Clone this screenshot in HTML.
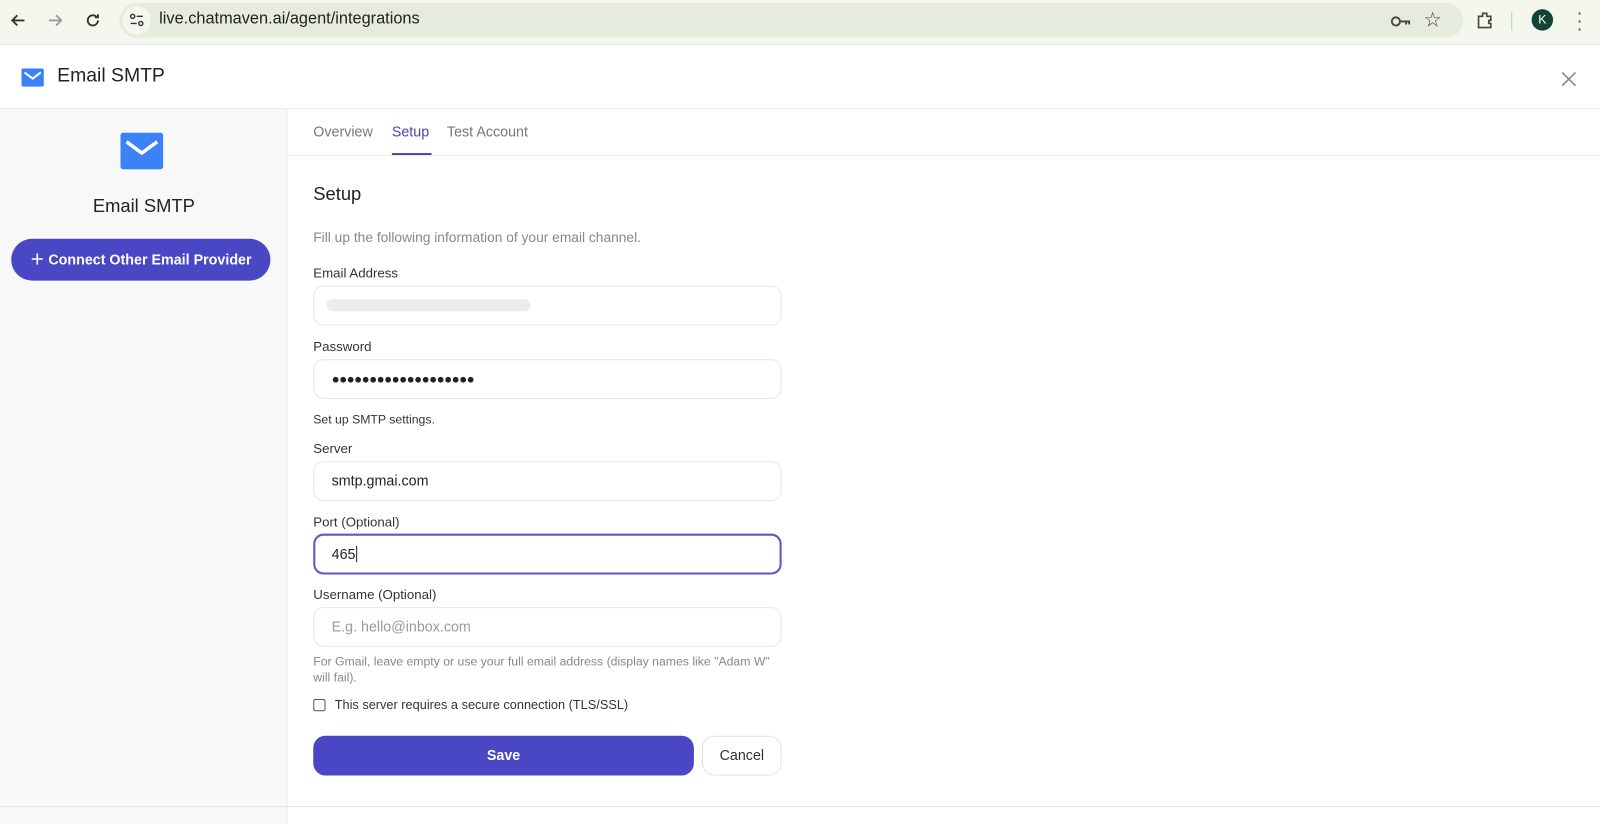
<!DOCTYPE html>
<html><head><meta charset="utf-8"><style>
*{box-sizing:border-box;margin:0;padding:0}
body{width:1600px;height:808px;overflow:hidden;font-family:"Liberation Sans",sans-serif;background:#fff;position:relative;color:#222}
#w{position:absolute;left:0;top:0;width:1568px;height:792px;transform:scale(1.0204);transform-origin:0 0}
.abs{position:absolute}
.chrome{left:0;top:0;width:1568px;height:44px;background:#f4f7ee;border-bottom:1px solid #e4e8dc}
.url{left:117px;top:3px;width:1317px;height:34px;border-radius:17px;background:#e6ebdf}
.lbl{font-size:13px;color:#333;position:absolute;left:307px}
.inp{position:absolute;left:307px;width:459px;height:39px;border:1px solid #e8e8e8;border-radius:10px;font-size:14px;color:#222;padding-left:17px;line-height:37px;background:#fff}
</style></head><body><div id="w">
<div class="abs chrome"></div>
<div class="abs url"></div>
<svg class="abs" style="left:8px;top:10px" width="20" height="20" viewBox="0 0 20 20"><path d="M16 10H4M9 5l-5 5 5 5" stroke="#333" stroke-width="1.8" fill="none"/></svg>
<svg class="abs" style="left:44px;top:10px" width="20" height="20" viewBox="0 0 20 20"><path d="M4 10h12M11 5l5 5-5 5" stroke="#999" stroke-width="1.8" fill="none"/></svg>
<svg class="abs" style="left:81px;top:10px" width="20" height="20" viewBox="0 0 20 20"><path d="M15 10a5 5 0 1 1-1.5-3.6M15 4v3h-3" stroke="#333" stroke-width="1.8" fill="none"/></svg>
<div class="abs" style="left:120px;top:6px;width:28px;height:28px;border-radius:14px;background:#f4f7ee"></div>
<svg class="abs" style="left:126px;top:12px" width="16" height="16" viewBox="0 0 16 16"><circle cx="4" cy="4" r="2" stroke="#333" fill="none" stroke-width="1.4"/><path d="M8 4h6M2 11h6" stroke="#333" stroke-width="1.4"/><circle cx="12" cy="11" r="2" stroke="#333" fill="none" stroke-width="1.4"/></svg>
<div class="abs" style="left:156px;top:10px;font-size:16px;color:#222">live.chatmaven.ai/agent/integrations</div>
<svg class="abs" style="left:1362px;top:12px" width="22" height="18" viewBox="0 0 22 18"><circle cx="6" cy="9" r="4" stroke="#444" stroke-width="1.8" fill="none"/><path d="M10 9h9v3M16 9v3" stroke="#444" stroke-width="1.8" fill="none"/></svg>
<div class="abs" style="left:1395px;top:7px;font-size:20px;color:#444">☆</div>
<svg class="abs" style="left:1446px;top:10px" width="20" height="20" viewBox="0 0 20 20"><path d="M3 6h4V3h4v3h4v4h-2v3h2v4H3z" stroke="#444" stroke-width="1.6" fill="none"/></svg>
<div class="abs" style="left:1481px;top:12px;width:1px;height:18px;background:#b8d4a8"></div>
<div class="abs" style="left:1501px;top:9px;width:21px;height:21px;border-radius:50%;background:#134236;color:#fff;font-size:12px;text-align:center;line-height:21px">K</div>
<div class="abs" style="left:1545px;top:8px;font-size:18px;color:#444;line-height:8px">·<br>·<br>·</div>

<svg class="abs" style="left:21px;top:67px" width="22" height="18" viewBox="0 0 22 18"><rect width="22" height="18" rx="2" fill="#3b82f6"/><path d="M3 4l8 6 8-6" stroke="#fff" stroke-width="2" fill="none"/></svg>
<div class="abs" style="left:56px;top:64px;font-size:19px;color:#222">Email SMTP</div>
<svg class="abs" style="left:1530px;top:70px" width="15" height="15" viewBox="0 0 15 15"><path d="M1 1l13 13M14 1L1 14" stroke="#888" stroke-width="1.5"/></svg>
<div class="abs" style="left:0;top:106px;width:1568px;height:1px;background:#ececec"></div>
<div class="abs" style="left:0;top:107px;width:282px;height:701px;background:#f8f8f8;border-right:1px solid #ececec"></div>
<svg class="abs" style="left:118px;top:130px" width="42" height="36" viewBox="0 0 42 36"><rect width="42" height="36" rx="3" fill="#3b82f6"/><path d="M6 9l15 11 15-11" stroke="#fff" stroke-width="3.5" fill="none"/></svg>
<div class="abs" style="left:0;width:282px;top:192px;text-align:center;font-size:18px;color:#222">Email SMTP</div>
<div class="abs" style="left:11px;top:234px;width:254px;height:41px;border-radius:21px;background:#4a47c4;color:#fff;font-size:14px;font-weight:bold;line-height:41px;text-align:center">＋ Connect Other Email Provider</div>

<div class="abs" style="left:307px;top:121px;font-size:14px;color:#777">Overview</div>
<div class="abs" style="left:384px;top:121px;font-size:14px;color:#4a47a8">Setup</div>
<div class="abs" style="left:384px;top:150px;width:39px;height:2px;background:#4a47a8"></div>
<div class="abs" style="left:438px;top:121px;font-size:14px;color:#777">Test Account</div>
<div class="abs" style="left:283px;top:152px;width:1285px;height:1px;background:#ececec"></div>

<div class="abs" style="left:307px;top:180px;font-size:18px;color:#222">Setup</div>
<div class="abs" style="left:307px;top:225px;font-size:13.5px;color:#888">Fill up the following information of your email channel.</div>
<div class="lbl" style="top:260px">Email Address</div>
<div class="inp" style="top:280px"><div style="position:absolute;left:12px;top:12px;width:200px;height:12px;border-radius:6px;background:#ececec"></div></div>
<div class="lbl" style="top:332px">Password</div>
<div class="inp" style="top:352px;font-size:13px;letter-spacing:-0.5px">●●●●●●●●●●●●●●●●●●●</div>
<div class="lbl" style="top:404px;font-size:12px">Set up SMTP settings.</div>
<div class="lbl" style="top:432px">Server</div>
<div class="inp" style="top:452px">smtp.gmai.com</div>
<div class="lbl" style="top:504px">Port (Optional)</div>
<div class="inp" style="top:523px;height:40px;border:2px solid #5b57c8;padding-left:16px;line-height:36px">465<span style="border-left:1px solid #222;margin-left:1px"></span></div>
<div class="lbl" style="top:575px">Username (Optional)</div>
<div class="inp" style="top:595px;color:#999">E.g. hello@inbox.com</div>
<div class="lbl" style="top:640px;font-size:12px;color:#888;width:460px;line-height:16px">For Gmail, leave empty or use your full email address (display names like "Adam W" will fail).</div>
<div class="abs" style="left:307px;top:685px;width:12px;height:12px;border:1px solid #555;border-radius:2px"></div>
<div class="abs" style="left:328px;top:684px;font-size:12.5px;color:#333">This server requires a secure connection (TLS/SSL)</div>
<div class="abs" style="left:307px;top:721px;width:373px;height:39px;border-radius:12px;background:#4a47c4;color:#fff;font-size:14px;font-weight:bold;text-align:center;line-height:39px">Save</div>
<div class="abs" style="left:688px;top:721px;width:78px;height:39px;border-radius:12px;border:1px solid #e2e2e2;color:#333;font-size:14px;text-align:center;line-height:37px">Cancel</div>
<div class="abs" style="left:0;top:790px;width:1568px;height:1px;background:#e4e4e4"></div>
</div></body></html>
